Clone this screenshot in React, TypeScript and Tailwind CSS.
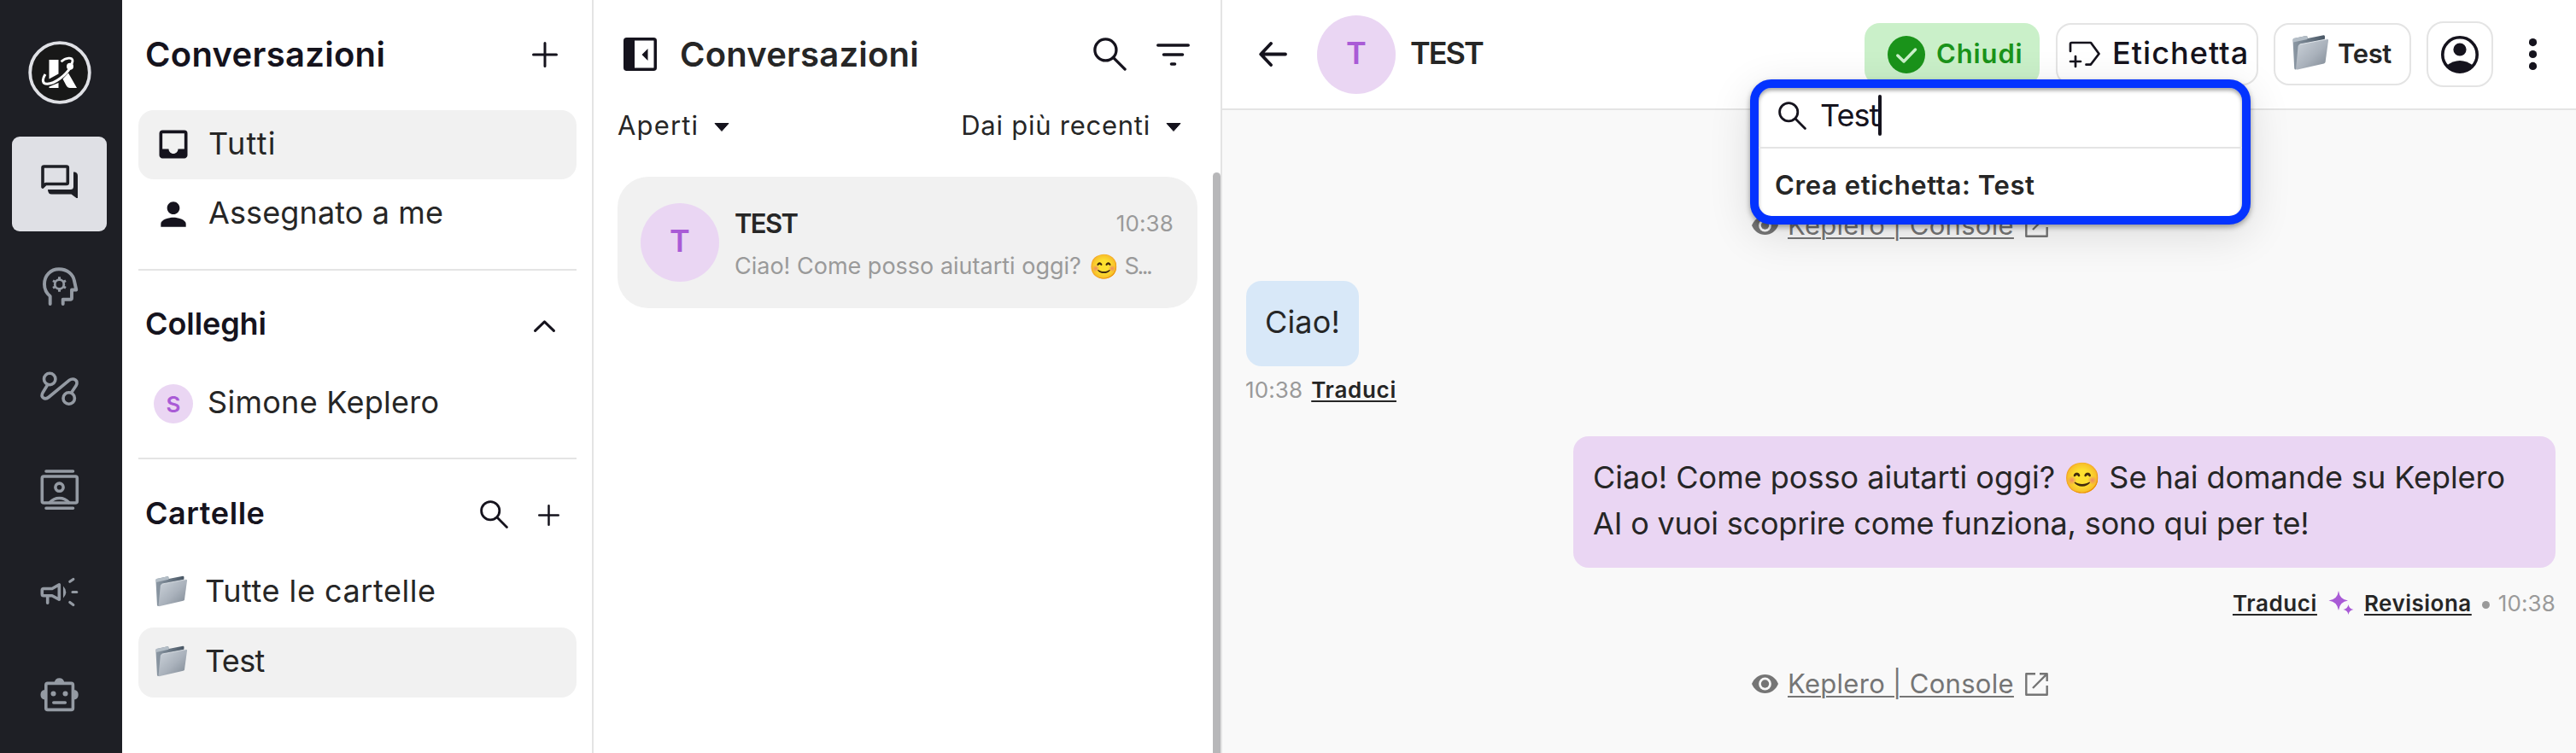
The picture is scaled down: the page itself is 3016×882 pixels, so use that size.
import type { ReactNode } from "react";
import { MdInbox, MdPerson } from "react-icons/md";

function Logo() {
  return (
    <svg className="h-[74px] w-[74px] shrink-0" viewBox="32.5 48 74 74" fill="none">
      <circle cx="69.5" cy="85" r="34.8" fill="#181818" stroke="#dfe0e5" strokeWidth="3.8" />
      <path d="M57 70H68V86.5L57 92.5Z" fill="#fff" />
      <path d="M57 101.5L68 97V103H57Z" fill="#fff" />
      <path d="M79.5 85.5L89.5 103H81.5Q78.5 103 77 100L73 92.5Z" fill="#fff" />
      <path d="M52.5 87C48.5 93.5 49 98.5 55 98.3C63.500 98 76 88.500 81.300 80" stroke="#fff" strokeWidth="3" />
      <circle cx="81.500" cy="77.800" r="4" fill="#fff" />
      <path d="M71 72.200C76.500 67.500 84.800 66.300 84.500 71.500C84.300 73.500 83.500 75 82 77" stroke="#fff" strokeWidth="2.800" />
    </svg>
  );
}

function NavButton({ active, viewBox, children }: { active?: boolean; viewBox: string; children: ReactNode }) {
  return (
    <button className={active ? "h-[111px] w-[111px] shrink-0 rounded-[9px] bg-[#dfe0e5] text-[#1e1f25]" : "h-[111px] w-[111px] shrink-0 rounded-[9px] text-[#949aa3]"}>
      <svg className="h-full w-full" viewBox={viewBox} fill="none" stroke="currentColor" strokeWidth="3.6" strokeLinecap="round" strokeLinejoin="round">
        {children}
      </svg>
    </button>
  );
}

function Sidebar() {
  return (
    <aside className="flex w-[143px] shrink-0 flex-col items-center gap-[9px] overflow-hidden bg-[#1e1f25] pt-12 pr-1">
      <div className="mb-[29px]">
        <Logo />
      </div>
      <NavButton active viewBox="14 160 111 111">
        <path d="M50 219V196.500Q50 195 51.500 195H77.800Q79.300 195 79.300 196.500V214Q79.300 215.500 77.800 215.500H53.500Z" />
        <path stroke="none" fill="currentColor" d="M86 201.500H87.500Q91 202 91 206V232H89.500L83.500 227.500H60.500Q56 227.500 56 222H82.500Q86 222 86 218.500Z" />
      </NavButton>
      <NavButton viewBox="14 280 111 111">
        <path strokeWidth="3.900" d="M58.700 356V347C54.500 343.500 52 338.500 52 333C52 322.500 59.500 315.300 69 315.300C79 315.300 85.500 321.500 87 329L89.300 339.500H84V349Q84 350.800 82.200 350.800H73.700V356" />
        <circle cx="69.500" cy="333" r="5.300" strokeWidth="2.800" />
        <path strokeWidth="3" strokeLinecap="butt" d="M69.500 327.500V324.300M69.500 338.500V341.700M64.700 330.200L62 328.700M74.300 335.800L77 337.300M64.700 335.800L62 337.300M74.300 330.200L77 328.700" />
      </NavButton>
      <NavButton viewBox="14 400 111 111">
        <circle cx="58.200" cy="444" r="6.700" />
        <circle cx="80.700" cy="466.500" r="6.700" />
        <path d="M55.500 451L50.300 459.500C46.800 465.500 52.500 469 57.300 465L80.500 445.800C86.500 441.500 92.300 446 89 451.800L83.500 460" />
      </NavButton>
      <NavButton viewBox="14 520 111 111">
        <path d="M54 552H85.500M54 595.300H85.500" />
        <rect x="49.300" y="558" width="41" height="31" rx="2" />
        <circle cx="69.500" cy="570.700" r="4.600" />
        <path d="M58.500 588.500C61.500 585 65 583.500 69.500 583.500S77.500 585 80.500 588.500" />
      </NavButton>
      <NavButton viewBox="14 640 111 111">
        <path d="M51 689.500H61L69.300 684.800V702.300L61 697.700H51Q49.300 697.700 49.300 696V691.200Q49.300 689.500 51 689.500ZM55.700 698V706.300" />
        <path stroke="none" fill="currentColor" d="M74 686.500Q80.500 693.500 74 700.500Z" />
        <path strokeWidth="3.200" d="M81.800 681.300L85.800 678.500M85 693.500H89.800M81.800 705.500L85.800 708.500" />
      </NavButton>
      <NavButton viewBox="14 760 111 111">
        <rect x="53.800" y="800.400" width="31.600" height="31" rx="2" />
        <path stroke="none" fill="currentColor" d="M63.800 799A5.800 5.800 0 0 1 75.200 799ZM52.500 808A5.800 5.800 0 0 0 52.500 819.500ZM86.700 808A5.800 5.800 0 0 1 86.700 819.500Z" />
        <circle cx="62.500" cy="812.500" r="3" fill="currentColor" stroke="none" />
        <circle cx="76.500" cy="812.500" r="3" fill="currentColor" stroke="none" />
        <path d="M62.800 823H76.300" />
      </NavButton>
    </aside>
  );
}

function SearchIcon({ className }: { className: string }) {
  return (
    <svg className={className} viewBox="0 0 33 33" fill="none" stroke="#15131d" strokeWidth="2.800" strokeLinecap="round">
      <circle cx="12.200" cy="12.200" r="10.600" />
      <path d="M20 20L31.400 31.400" />
    </svg>
  );
}

function PlusIcon({ className }: { className: string }) {
  return (
    <svg className={className} viewBox="0 0 30 30" fill="none" stroke="#15131d" strokeWidth="3" strokeLinecap="round">
      <path d="M15 1.500V28.500M1.500 15H28.500" />
    </svg>
  );
}

function FolderIcon({ className }: { className: string }) {
  return (
    <svg className={className} viewBox="0 0 42 41">
      <defs>
        <linearGradient id="folderFront" x1="0" y1="0" x2="1" y2="1">
          <stop offset="0" stopColor="#cdd4db" />
          <stop offset="0.550" stopColor="#a9b1bb" />
          <stop offset="1" stopColor="#7d8792" />
        </linearGradient>
        <linearGradient id="folderBack" x1="0" y1="0" x2="1" y2="0">
          <stop offset="0" stopColor="#8d99a5" />
          <stop offset="1" stopColor="#485664" />
        </linearGradient>
      </defs>
      <path d="M1.500 4L16 1Q17.500 0.800 17.500 2.500V4L36.500 0.300Q38.200 0.200 38 2L37.500 12L4 40.500Q2.300 40.500 2.200 39L0.500 6Q0.500 4.300 1.500 4Z" fill="url(#folderBack)" />
      <path d="M1.500 4L16 1Q17.500 0.800 17.500 2.500V5L1 8.500L0.500 6Q0.500 4.300 1.500 4Z" fill="#b4bec7" />
      <path d="M8.500 11L40.500 4.800Q42.200 4.800 42 6.500L38.600 31.500Q38.300 33 36.800 33.400L6 40.500Q4 40.700 4.100 39L6.600 13Q6.800 11.400 8.500 11Z" fill="url(#folderFront)" />
      <path d="M8.500 11L40.500 4.800" stroke="#e8ecf0" strokeWidth="0.900" />
    </svg>
  );
}

function Caret() {
  return (
    <svg className="mt-[3px] h-[10px] w-[18px]" viewBox="0 0 18 10">
      <path d="M1 0.500H17L9 9.500Z" fill="#15131d" stroke="#15131d" strokeLinejoin="round" />
    </svg>
  );
}

function FoldersPanel() {
  return (
    <nav className="flex w-[552px] shrink-0 flex-col border-r-2 border-[#e4e4e4] bg-white pr-[18px] pl-[19px] text-[36px] text-[#262626]">
      <div className="mb-px flex h-32 items-center justify-between pr-[22px] pl-2">
        <h1 className="text-[40px] font-semibold tracking-[0.300px] text-[#15131d]">Conversazioni</h1>
        <PlusIcon className="h-[30px] w-[30px]" />
      </div>
      <div className="flex h-[81px] items-center gap-[19px] rounded-[18px] bg-[#f1f1f1] pb-0.5 pl-[19px]">
        <MdInbox className="h-11 w-11 text-[#15131d]" />
        <span className="pb-px tracking-[1.300px]">Tutti</span>
      </div>
      <div className="flex h-[82px] items-center gap-[19px] pl-[19px]">
        <MdPerson className="h-11 w-11 text-[#15131d]" />
        <span className="pb-1 tracking-[0.120px]">Assegnato a me</span>
      </div>
      <div className="mt-[23px] h-0.5 bg-[#e4e4e4]" />
      <div className="flex h-[126px] items-center justify-between pr-[25px] pl-2">
        <h2 className="pb-0.5 font-semibold tracking-[-0.080px] text-[#15131d]">Colleghi</h2>
        <svg className="mt-1 h-[14px] w-[25px]" viewBox="0 0 25 14" fill="none" stroke="#15131d" strokeWidth="3" strokeLinecap="round" strokeLinejoin="round">
          <path d="M1.600 12.400L12.500 1.800L23.400 12.400" />
        </svg>
      </div>
      <div className="flex h-[60px] items-center gap-[17px] pl-[18px]">
        <span className="flex h-[46px] w-[46px] items-center justify-center rounded-full bg-[#ead6f3] text-[26px] font-semibold text-[#a95bd6]">S</span>
        <span className="pb-1 tracking-[0.290px]">Simone Keplero</span>
      </div>
      <div className="mt-[33px] h-0.5 bg-[#e4e4e4]" />
      <div className="flex h-[115px] items-center pt-[13px] pr-5 pl-2">
        <h2 className="flex-1 pb-[3px] font-semibold tracking-[0.570px] text-[#15131d]">Cartelle</h2>
        <SearchIcon className="mr-[35px] h-[33px] w-[33px]" />
        <PlusIcon className="mt-0.5 h-[25px] w-[25px]" />
      </div>
      <div className="flex h-[82px] items-center gap-[21px] pb-1 pl-5">
        <FolderIcon className="h-[37px] w-[37px]" />
        <span className="tracking-[0.550px]">Tutte le cartelle</span>
      </div>
      <div className="flex h-[82px] items-center gap-[21px] rounded-[18px] bg-[#f1f1f1] pb-1 pl-5">
        <FolderIcon className="h-[37px] w-[37px]" />
        <span className="tracking-[-0.610px]">Test</span>
      </div>
    </nav>
  );
}

function ConversationList() {
  return (
    <section className="flex w-[736px] shrink-0 flex-col border-r-2 border-[#e4e4e4] bg-white text-[#262626]">
      <div className="flex h-[127px] items-center pr-9 pl-[35px]">
        <svg className="h-[39px] w-[39px]" viewBox="0 0 39 39" fill="#15131d">
          <rect x="1.750" y="1.750" width="35.500" height="35.500" rx="2" fill="none" stroke="#15131d" strokeWidth="3.500" />
          <path d="M2 2H13V37H2ZM28.500 13V27L21.500 20Z" />
        </svg>
        <h2 className="ml-[27px] flex-1 text-[40px] font-semibold tracking-[0.200px]">Conversazioni</h2>
        <SearchIcon className="mr-[35px] h-[39px] w-[39px]" />
        <svg className="h-[26px] w-[39px]" viewBox="0 0 39 26" stroke="#15131d" strokeWidth="3.600" strokeLinecap="round">
          <path d="M1.800 2H37.200M8.500 13H30.500M17.500 24H21.500" />
        </svg>
      </div>
      <div className="flex h-[75px] items-center justify-between pr-[46px] pb-[35px] pl-7 text-[31px]">
        <div className="flex items-center gap-[18px]">
          <span className="tracking-[1.150px]">Aperti</span>
          <Caret />
        </div>
        <div className="flex items-center gap-[18px]">
          <span className="tracking-[0.750px]">Dai più recenti</span>
          <Caret />
        </div>
      </div>
      <div className="flex flex-1 justify-between pl-7">
        <div className="mt-[5px] flex h-[154px] w-[679px] items-center rounded-[36px] bg-[#f1f1f1] pr-7 pl-[27px]">
          <span className="flex h-[92px] w-[92px] items-center justify-center rounded-full bg-[#ead6f3] pb-1 text-[36px] font-semibold text-[#a95bd6]">T</span>
          <div className="ml-[18px] flex-1 pt-1.5">
            <div className="flex justify-between leading-[50px]">
              <span className="text-[31px] font-semibold tracking-[-1.670px]">TEST</span>
              <span className="text-[26px] tracking-[0.120px] text-[#9a9a9a]">10:38</span>
            </div>
            <div className="flex h-[50px] items-center text-[27px] whitespace-pre text-[#9a9a9a]">
              <span>Ciao! Come posso aiutarti oggi? </span>
              <span className="flex w-[38px] justify-center text-[28px]">😊</span>
              <span className="tracking-[-2.500px]"> S...</span>
            </div>
          </div>
        </div>
        <div className="w-[9px] rounded-t-full bg-[#b7b7b9]" />
      </div>
    </section>
  );
}

function ChatHeader() {
  return (
    <header className="flex h-[129px] shrink-0 items-center border-b-2 border-[#e4e4e4] bg-white pr-[46px] pl-[43px]">
      <svg className="h-[29px] w-[33px]" viewBox="0 0 33 29" fill="none" stroke="#15131d" strokeWidth="3.800" strokeLinecap="round" strokeLinejoin="round">
        <path d="M14 2L2.200 14.500L14 27M3 14.500H31" />
      </svg>
      <span className="ml-[35px] flex h-[92px] w-[92px] items-center justify-center rounded-full bg-[#ead6f3] pb-1 text-[36px] font-semibold text-[#a95bd6]">T</span>
      <h2 className="ml-[17px] flex-1 pb-1 text-[36px] font-semibold tracking-[-1.990px]">TEST</h2>
      <button className="flex h-[73px] w-[205px] items-center gap-[13px] rounded-[18px] bg-[#caf0c9] pl-[27px] text-[#1a931a]">
        <svg className="h-11 w-11" viewBox="0 0 44 44" fill="none">
          <circle cx="22" cy="22" r="22" fill="#1a931a" />
          <path d="M11.800 23L19 30L32.500 16" stroke="#caf0c9" strokeWidth="3.500" strokeLinecap="round" strokeLinejoin="round" />
        </svg>
        <span className="pb-px text-[31px] font-semibold tracking-[0.870px]">Chiudi</span>
      </button>
      <button className="ml-[19px] flex h-[73px] w-[237px] items-center gap-3.5 rounded-[18px] border-2 border-[#e4e4e4] pl-[13px] text-[#15131d]">
        <svg className="h-8 w-[37px]" viewBox="2422 48 37 32" fill="none" stroke="currentColor" strokeWidth="2.700" strokeLinecap="round" strokeLinejoin="round">
          <path d="M2424 60V51.500Q2424 50 2425.500 50H2448L2457.500 63L2448.300 75Q2447.700 75.700 2446.700 75.700H2442.500M2430 66V78M2424 72H2436" />
        </svg>
        <span className="pb-1 text-[36px] font-medium tracking-[1.050px]">Etichetta</span>
      </button>
      <button className="ml-[18px] flex h-[73px] w-[161px] items-center gap-[11px] rounded-[18px] border-2 border-[#e4e4e4] pl-5">
        <FolderIcon className="mb-1 h-[41px] w-[42px]" />
        <span className="pb-px text-[31px] font-semibold tracking-[-0.370px]">Test</span>
      </button>
      <button className="ml-[18px] flex h-[77px] w-[78px] items-center justify-center rounded-[20px] border-2 border-[#e4e4e4]">
        <svg className="h-11 w-11" viewBox="0 0 44 44" fill="#15131d">
          <circle cx="22" cy="22" r="20.200" fill="none" stroke="#15131d" strokeWidth="3.600" />
          <circle cx="22" cy="16" r="7.600" />
          <path d="M6 35Q22 23 38 35A21 21 0 0 1 6 35Z" />
        </svg>
      </button>
      <svg className="ml-[42px] h-[37px] w-[9px]" viewBox="0 0 9 37" fill="#15131d">
        <circle cx="4.500" cy="4.600" r="4.600" />
        <circle cx="4.500" cy="18.500" r="4.600" />
        <circle cx="4.500" cy="32.400" r="4.600" />
      </svg>
    </header>
  );
}

function PageLink() {
  return (
    <div className="flex h-[52px] items-center pl-[620px] text-[#757575]">
      <svg className="h-[22px] w-[31px]" viewBox="0 0 31 22">
        <path d="M0 11C2.500 4.500 8.500 0 15.500 0S28.500 4.500 31 11C28.500 17.500 22.500 22 15.500 22S2.500 17.500 0 11Z" fill="currentColor" />
        <circle cx="15.500" cy="11" r="7.400" fill="#f9f9f9" />
        <circle cx="15.500" cy="11" r="4.700" fill="currentColor" />
      </svg>
      <a className="ml-[11px] text-[31px] tracking-[0.300px] underline decoration-2 underline-offset-[3px]">Keplero | Console</a>
      <svg className="ml-[13px] h-[27px] w-[27px]" viewBox="0 0 27 27" fill="none" stroke="currentColor" strokeWidth="2.400" strokeLinejoin="round">
        <path d="M12 1.300H1.300V25.700H25.700V15M17 1.300H25.700V10M25.300 1.700L9 18" />
      </svg>
    </div>
  );
}

function LabelPopup() {
  return (
    <div className="absolute top-[93px] left-[618px] h-[170px] w-[586px] rounded-[25px] border-[10px] border-[#0433ff] bg-white shadow-[0_12px_50px_rgba(0,0,0,0.12),0_3px_6px_rgba(0,0,0,0.350),inset_0_3px_4px_rgba(0,0,0,0.350)]">
      <div className="flex h-[69px] items-center pb-[5px] pl-[23px]">
        <SearchIcon className="h-[33px] w-[33px]" />
        <span className="ml-4 text-[36px] tracking-[-0.940px] text-[#15131d]">Test</span>
        <span className="h-12 w-1 rounded-full bg-[#15131d]" />
      </div>
      <div className="h-0.5 bg-[#e4e4e4]" />
      <div className="flex h-[79px] items-center pt-[7px] pl-[19px] text-[31px] font-semibold tracking-[0.610px]">Crea etichetta: Test</div>
    </div>
  );
}

function Chat() {
  return (
    <main className="relative flex min-w-0 flex-1 flex-col bg-[#f9f9f9] text-[#262626]">
      <ChatHeader />
      <div className="flex flex-col pt-[109px]">
        <PageLink />
        <div className="mt-[39px] ml-7 flex h-[100px] w-[132px] items-center rounded-[18px] bg-[#d8e8f8] pb-[5px] pl-[22px] text-[36px] tracking-[0.170px]">Ciao!</div>
        <div className="ml-[27px] flex h-[54px] items-center gap-[10px] text-[26px]">
          <span className="tracking-[0.120px] text-[#9a9a9a]">10:38</span>
          <a className="font-semibold tracking-[0.700px] underline decoration-2 underline-offset-[3px]">Traduci</a>
        </div>
        <div className="mt-7 mr-6 flex h-[154px] w-[1150px] flex-col self-end rounded-[18px] bg-[#ead6f3] pt-[21px] pl-[23px] text-[36px] leading-[54px]">
          <div className="flex whitespace-pre">
            <span>Ciao! Come posso aiutarti oggi? </span>
            <span className="flex w-[43px] justify-center text-[35px]">😊</span>
            <span className="tracking-[-0.050px]"> Se hai domande su Keplero</span>
          </div>
          <div className="tracking-[-0.160px]">AI o vuoi scoprire come funziona, sono qui per te!</div>
        </div>
        <div className="mt-3.5 mr-6 flex h-[54px] items-center justify-end text-[26px]">
          <a className="font-semibold tracking-[0.600px] underline decoration-2 underline-offset-[3px]">Traduci</a>
          <svg className="ml-[13px] h-7 w-[30px]" viewBox="0 0 30 28" fill="#a95bd6">
            <path d="M12 0Q13.300 10.200 23 11.500Q13.300 12.800 12 23Q10.700 12.800 0.500 11.500Q10.700 10.200 12 0ZM23.500 16Q24.200 21.200 29.500 22Q24.200 22.800 23.500 28Q22.800 22.800 17.500 22Q22.800 21.200 23.500 16Z" />
          </svg>
          <a className="ml-3 font-semibold tracking-[0.500px] underline decoration-2 underline-offset-[3px]">Revisiona</a>
          <span className="mt-1 ml-3 h-[9px] w-[9px] rounded-full bg-[#9a9a9a]" />
          <span className="ml-2.5 tracking-[0.120px] text-[#9a9a9a]">10:38</span>
        </div>
        <div className="mt-[42px]">
          <PageLink />
        </div>
      </div>
      <LabelPopup />
    </main>
  );
}

export default function App() {
  return (
    <div className="flex h-screen w-full overflow-hidden bg-white font-['Inter','Liberation_Sans',sans-serif]">
      <Sidebar />
      <FoldersPanel />
      <ConversationList />
      <Chat />
    </div>
  );
}
